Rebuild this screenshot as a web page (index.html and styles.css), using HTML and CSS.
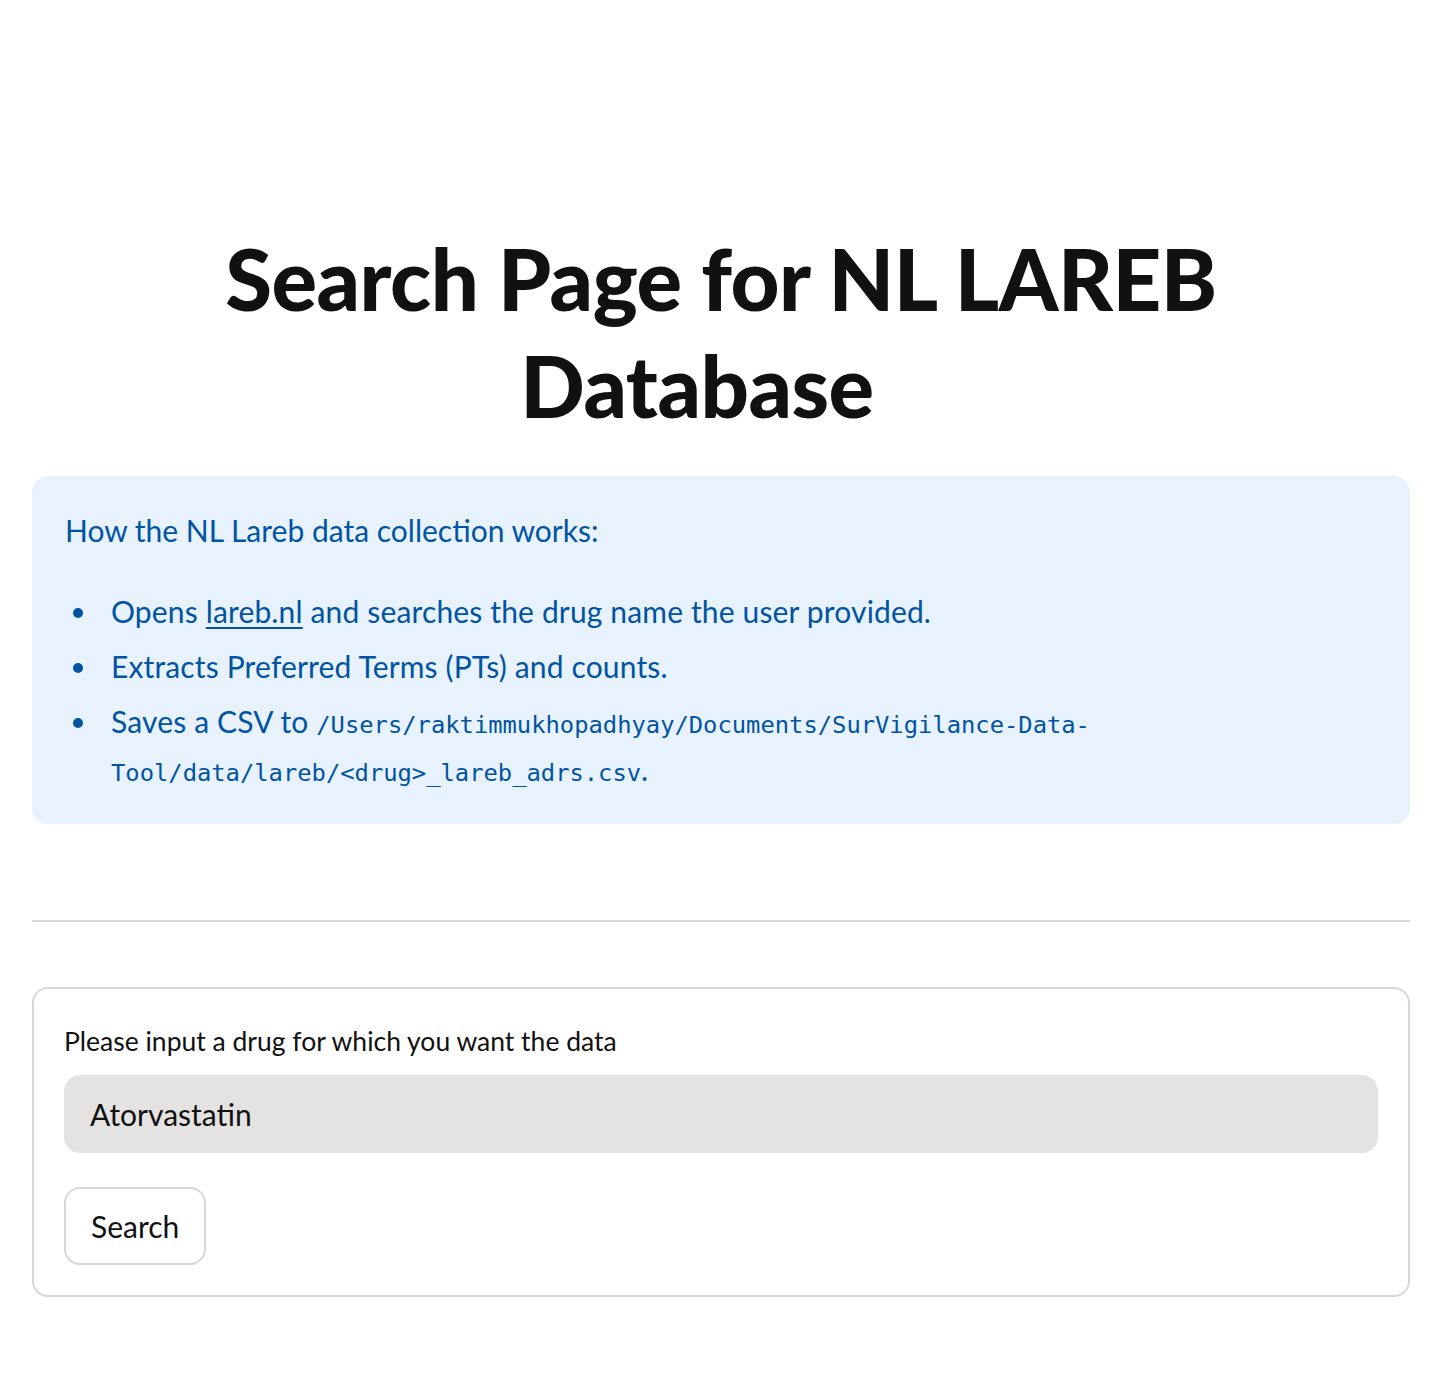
FILE: index.html
```html
<!DOCTYPE html>
<html lang="en">
<head>
<meta charset="utf-8">
<title>Search Page for NL LAREB Database</title>
<link rel="stylesheet" href="styles.css">
</head>
<body>
<main class="page">
  <h1 class="title">Search Page for NL LAREB Database<span class="anchor" aria-hidden="true"></span></h1>

  <div class="alert">
    <p class="alert-lead">How the NL Lareb data collection works:</p>
    <ul class="alert-list">
      <li>Opens <a href="#" class="link">lareb.nl</a> and searches the drug name the user provided.</li>
      <li>Extracts Preferred Terms (PTs) and counts.</li>
      <li>Saves a CSV to <code class="code">/Users/raktimmukhopadhyay/Documents/SurVigilance-Data-<br>Tool/data/lareb/&lt;drug&gt;_lareb_adrs.csv</code>.</li>
    </ul>
  </div>

  <hr class="divider">

  <form class="form" onsubmit="return false;">
    <label class="label" for="drug">Please input a drug for which you want the data</label>
    <input class="input" id="drug" type="text" value="Atorvastatin">
    <button class="button" type="button">Search</button>
  </form>
</main>
</body>
</html>
```

FILE: styles.css
```css
* { box-sizing: border-box; }

html, body {
  margin: 0;
  padding: 0;
  background: #ffffff;
}

body {
  font-family: Lato, "Noto Sans", sans-serif;
  color: #111111;
}

.page {
  padding: 225px 32px 80px 32px;
}

.title {
  margin: 0 auto;
  max-width: 1120px;
  text-align: center;
  font-size: 85px;
  line-height: 107px;
  font-weight: 900;
  color: #111111;
  letter-spacing: -0.5px;
}

.anchor {
  display: inline-block;
  width: 48px;
  height: 1px;
}

.alert {
  margin-top: 37px;
  background: #e8f2fc;
  color: #0054a3;
  border-radius: 16px;
  padding: 30px 32px 31px 33px;
  font-size: 30px;
}

.alert-lead {
  margin: 0 0 33px 0;
  line-height: 48px;
}

.alert-list {
  margin: 0;
  padding-left: 46px;
  list-style: none;
}

.alert-list li {
  line-height: 48px;
  margin: 0 0 7px 0;
  letter-spacing: 0.15px;
}

.alert-list li::before {
  content: "";
  display: inline-block;
  width: 10px;
  height: 10px;
  border-radius: 50%;
  background: #0054a3;
  margin-left: -38px;
  margin-right: 28px;
  vertical-align: middle;
  position: relative;
  top: -2px;
}

.alert-list li:last-child { margin-bottom: 0; }

.link {
  color: #0054a3;
  text-decoration: underline;
  text-underline-offset: 4px;
  text-decoration-thickness: 2px;
}

.code {
  font-family: "DejaVu Sans Mono", "Liberation Mono", monospace;
  font-size: 23.8px;
  line-height: 1;
  letter-spacing: 0;
  color: #0054a3;
  white-space: nowrap;
}

.divider {
  margin: 96px 0 0 0;
  border: 0;
  border-top: 2px solid #d6d6d7;
  height: 0;
}

.form {
  margin-top: 65px;
  border: 2px solid #d6d6d7;
  border-radius: 16px;
  padding: 30px;
  display: flex;
  flex-direction: column;
  align-items: flex-start;
}

.label {
  font-size: 26.5px;
  line-height: 44px;
  color: #111111;
  margin-bottom: 12px;
}

.input {
  width: 100%;
  height: 78px;
  border: 2px solid #e4e3e1;
  background: #e4e3e1;
  border-radius: 16px;
  padding: 0 24px;
  font-family: Lato, "Noto Sans", sans-serif;
  font-size: 30px;
  color: #111111;
  outline: none;
}

.button {
  margin-top: 34px;
  height: 78px;
  padding: 0 25px;
  background: #ffffff;
  border: 2px solid #d6d6d7;
  border-radius: 16px;
  font-family: Lato, "Noto Sans", sans-serif;
  font-size: 30px;
  color: #111111;
  cursor: pointer;
}
```
